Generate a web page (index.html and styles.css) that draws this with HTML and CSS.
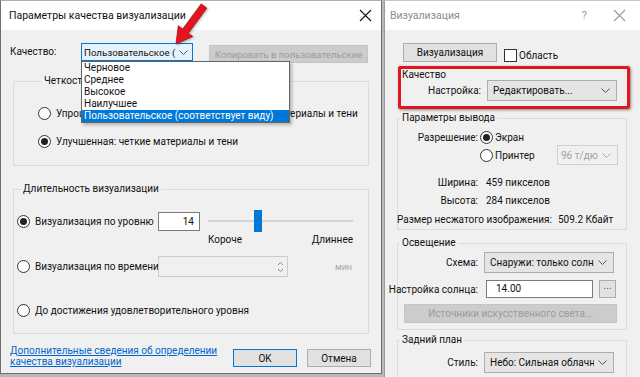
FILE: index.html
```html
<!DOCTYPE html>
<html lang="ru">
<head>
  <meta charset="UTF-8" />
  <title>Параметры качества визуализации</title>
  <link rel="stylesheet" href="styles.css">
</head>
<body>
  <div class="desktop">
    <!-- Quality settings dialog -->
    <div class="dialog dialog-quality">
      <div class="titlebar">
        <span class="title">Параметры качества визуализации</span>
        <svg class="close" width="13" height="13" viewBox="0 0 13 13"><path d="M1 1L12 12M12 1L1 12" stroke="#111" stroke-width="1.1"/></svg>
      </div>
      <div class="dialog-body">
        <div class="quality-row">
          <span class="quality-label">Качество:</span>
          <div class="combo-wrap">
            <div class="combo combo-focus">
              <span class="combo-text">Пользовательское (</span>
              <svg class="chev" width="9" height="5" viewBox="0 0 9 5"><polyline points="0.5,0.5 4.5,4.5 8.5,0.5" fill="none" stroke="#555"/></svg>
            </div>
            <ul class="dropdown">
              <li>Черновое</li>
              <li>Среднее</li>
              <li>Высокое</li>
              <li>Наилучшее</li>
              <li class="selected">Пользовательское (соответствует виду)</li>
            </ul>
          </div>
          <div class="btn btn-disabled btn-copy">Копировать в пользовательские</div>
        </div>

        <fieldset class="group group-sharp">
          <legend>Четкость освещения</legend>
          <div class="option"><span class="radio"></span>Упрощенная: размытые отражения, нечеткие материалы и тени</div>
          <div class="option"><span class="radio checked"></span>Улучшенная: четкие материалы и тени</div>
        </fieldset>

        <fieldset class="group group-time">
          <legend>Длительность визуализации</legend>
          <div class="time-row row-level">
            <div class="option option-fixed"><span class="radio checked"></span>Визуализация по уровню</div>
            <div class="num-box">14</div>
            <div class="slider"><span class="thumb"></span></div>
          </div>
          <div class="slider-labels">
            <span>Короче</span>
            <span>Длиннее</span>
          </div>
          <div class="time-row row-minutes">
            <div class="option option-fixed"><span class="radio"></span>Визуализация по времени</div>
            <div class="spin-box">
              <svg class="spin" width="9" height="14" viewBox="0 0 9 14"><path d="M2 5L4.5 2.5L7 5M2 9L4.5 11.5L7 9" fill="none" stroke="#888"/></svg>
            </div>
            <span class="unit">мин</span>
          </div>
          <div class="option row-enough"><span class="radio"></span>До достижения удовлетворительного уровня</div>
        </fieldset>

        <div class="footer">
          <a class="help-link" href="#">Дополнительные сведения об определении<br>качества визуализации</a>
          <div class="btn btn-default">OK</div>
          <div class="btn">Отмена</div>
        </div>
      </div>
    </div>

    <!-- Render panel -->
    <div class="dialog dialog-render">
      <div class="titlebar titlebar-inactive">
        <span class="title">Визуализация</span>
        <span class="title-tools">
          <span class="help">?</span>
          <svg width="13" height="13" viewBox="0 0 13 13"><path d="M1 1L12 12M12 1L1 12" stroke="#9a9a9a" stroke-width="1.1"/></svg>
        </span>
      </div>
      <div class="dialog-body render-body">
        <div class="render-row">
          <div class="btn btn-render">Визуализация</div>
          <span class="checkbox"></span>
          <span class="check-label">Область</span>
        </div>

        <div class="highlight">
          <div class="highlight-title">Качество</div>
          <div class="form-row">
            <span class="form-label">Настройка:</span>
            <div class="combo combo-wide">
              <span class="combo-text">Редактировать...</span>
              <svg class="chev" width="9" height="5" viewBox="0 0 9 5"><polyline points="0.5,0.5 4.5,4.5 8.5,0.5" fill="none" stroke="#555"/></svg>
            </div>
          </div>
        </div>

        <fieldset class="group side-group group-output">
          <legend>Параметры вывода</legend>
          <div class="form-row out-first">
            <span class="form-label">Разрешение:</span>
            <span class="radio checked"></span>
            <span class="radio-text">Экран</span>
          </div>
          <div class="form-row out-printer">
            <span class="form-label"></span>
            <span class="radio"></span>
            <span class="radio-text">Принтер</span>
            <div class="combo combo-disabled">
              <span class="combo-text">96 т/дюйм</span>
              <svg class="chev" width="9" height="5" viewBox="0 0 9 5"><polyline points="0.5,0.5 4.5,4.5 8.5,0.5" fill="none" stroke="#aaa"/></svg>
            </div>
          </div>
          <div class="form-row out-size">
            <span class="form-label">Ширина:</span>
            <span class="value">459 пикселов</span>
          </div>
          <div class="form-row out-height">
            <span class="form-label">Высота:</span>
            <span class="value">284 пикселов</span>
          </div>
          <div class="form-row out-raw">
            <span>Размер несжатого изображения:</span>
            <span class="raw-value">509.2 Кбайт</span>
          </div>
        </fieldset>

        <fieldset class="group side-group group-light">
          <legend>Освещение</legend>
          <div class="form-row light-scheme">
            <span class="form-label">Схема:</span>
            <div class="combo combo-wide">
              <span class="combo-text">Снаружи: только солнце</span>
              <svg class="chev" width="9" height="5" viewBox="0 0 9 5"><polyline points="0.5,0.5 4.5,4.5 8.5,0.5" fill="none" stroke="#555"/></svg>
            </div>
          </div>
          <div class="form-row light-sun">
            <span class="form-label">Настройка солнца:</span>
            <div class="text-box">14.00</div>
            <div class="btn btn-dots">...</div>
          </div>
          <div class="btn btn-disabled btn-lights">Источники искусственного света...</div>
        </fieldset>

        <fieldset class="group side-group group-back">
          <legend>Задний план</legend>
          <div class="form-row back-style">
            <span class="form-label">Стиль:</span>
            <div class="combo combo-wide">
              <span class="combo-text">Небо: Сильная облачность</span>
              <svg class="chev" width="9" height="5" viewBox="0 0 9 5"><polyline points="0.5,0.5 4.5,4.5 8.5,0.5" fill="none" stroke="#555"/></svg>
            </div>
          </div>
        </fieldset>
      </div>
    </div>

    <!-- Annotation arrow -->
    <svg class="arrow" width="50" height="50" viewBox="165 0 50 50">
      <polygon points="176,44 192.7,36.4 188.3,33.2 206.8,8.1 201.2,3.9 182.7,29 178.3,25.8" fill="#e3141c" stroke="#a80d12" stroke-width="0.8" stroke-linejoin="round"/>
    </svg>
  </div>
</body>
</html>
```

FILE: styles.css
```css
/* Reset & basic styling */
* {
  box-sizing: border-box;
  margin: 0;
  padding: 0;
}
body {
  font-family: Roboto, 'Liberation Sans', sans-serif;
  font-size: 10px;
  color: #111;
  background: #b8b8b8;
  width: 640px;
  height: 377px;
  overflow: hidden;
}
.desktop {
  position: relative;
  display: flex;
  height: 377px;
}
.dialog {
  background: #f0f0f0;
  display: flex;
  flex-direction: column;
}
.dialog-quality {
  width: 382px;
  height: 374px;
  border: 1px solid #6f6f6f;
  border-top-color: #b0b0b0;
}
.dialog-render {
  flex: 1;
  margin-left: 2px;
  border-left: 1px solid #9a9a9a;
  border-top: 1px solid #c8c8c8;
}

/* Title bars */
.titlebar {
  height: 29px;
  flex-shrink: 0;
  background: #fff;
  display: flex;
  align-items: center;
  justify-content: space-between;
  padding: 0 9px 0 8px;
}
.title {
  font-size: 10.5px;
}
.titlebar-inactive {
  padding: 0 14px 0 5px;
  color: #8c8c8c;
}
.title-tools {
  display: flex;
  align-items: center;
  gap: 26px;
}
.help {
  font-size: 11px;
  color: #9a9a9a;
}

/* Generic controls */
.btn {
  height: 18px;
  display: flex;
  align-items: center;
  justify-content: center;
  background: #e1e1e1;
  border: 1px solid #adadad;
  white-space: nowrap;
}
.btn-disabled {
  background: #cccccc;
  border-color: #c4c4c4;
  color: #9b9b9b;
}
.btn-default {
  border-color: #0078d7;
}
.radio {
  width: 13px;
  height: 13px;
  flex-shrink: 0;
  border: 1px solid #333;
  border-radius: 50%;
  background: #fff;
  display: flex;
  align-items: center;
  justify-content: center;
}
.radio.checked::after {
  content: '';
  width: 7px;
  height: 7px;
  border-radius: 50%;
  background: #222;
}
.checkbox {
  width: 13px;
  height: 13px;
  border: 1px solid #333;
  background: #fff;
}
.combo {
  height: 21px;
  display: flex;
  align-items: center;
  padding: 0 6px 0 5px;
  background: #e5e5e5;
  border: 1px solid #adadad;
  white-space: nowrap;
  overflow: hidden;
}
.combo-text {
  flex: 1;
  overflow: hidden;
}
.chev {
  flex-shrink: 0;
  margin-left: 4px;
}
.combo-disabled {
  background: #f0f0f0;
  border-color: #cfcfcf;
  color: #a0a0a0;
  padding-left: 3px;
}

/* Quality dialog */
.dialog-body {
  flex: 1;
  padding-top: 13px;
}
.quality-row {
  display: flex;
  align-items: flex-start;
  height: 19px;
  padding-left: 9px;
}
.quality-label {
  width: 71px;
  line-height: 18px;
}
.combo-wrap {
  position: relative;
  width: 112px;
}
.combo-focus {
  height: 18px;
  background: #e5f1fb;
  border-color: #0078d7;
  padding: 0 4px 0 2px;
  font-size: 9.7px;
}
.combo-focus .chev {
  margin-left: 2px;
}
.dropdown {
  position: absolute;
  top: 18px;
  left: 0;
  width: 209px;
  z-index: 2;
  list-style: none;
  background: #fff;
  border: 1px solid #646464;
  box-shadow: 2px 2px 3px rgba(0, 0, 0, 0.25);
}
.dropdown li {
  height: 12px;
  line-height: 12px;
  padding-left: 2px;
  white-space: nowrap;
}
.dropdown li.selected {
  background: #0078d7;
  color: #fff;
}
.btn-copy {
  width: 159px;
  margin: 2px 0 0 16px;
  font-size: 9.6px;
}

.group {
  border: 1px solid #dcdcdc;
  margin: 12px 12px 0;
}
.group legend {
  margin-left: 4px;
  padding: 0 2px;
  line-height: 14px;
}
.option {
  display: flex;
  align-items: center;
  gap: 5px;
  height: 16px;
  white-space: nowrap;
}
.group-sharp {
  display: flex;
  flex-direction: column;
  gap: 12px;
  padding: 17px 0 16px 24px;
}
.group-time {
  margin-top: 16px;
  padding: 14px 0 15px 3px;
}
.time-row {
  display: flex;
  align-items: center;
}
.row-level {
  height: 22px;
}
.option-fixed {
  width: 141px;
}
.num-box {
  width: 42px;
  height: 19px;
  background: #fff;
  border: 1px solid #7a7a7a;
  text-align: right;
  padding-right: 5px;
  line-height: 17px;
}
.slider {
  width: 145px;
  height: 22px;
  margin-left: 8px;
  display: flex;
  align-items: center;
  background: linear-gradient(#d4d4d4, #d4d4d4) center / 100% 2px no-repeat;
}
.thumb {
  width: 8px;
  height: 22px;
  margin-left: 46px;
  background: #0078d7;
}
.slider-labels {
  display: flex;
  justify-content: space-between;
  width: 145px;
  height: 14px;
  margin: 2px 0 0 191px;
}
.row-minutes {
  height: 21px;
  margin-top: 8px;
}
.spin-box {
  width: 130px;
  height: 21px;
  border: 1px solid #cccccc;
  background: #f0f0f0;
  display: flex;
  justify-content: flex-end;
  align-items: center;
  padding-right: 2px;
}
.unit {
  margin-left: 47px;
  font-size: 9px;
  color: #a8a8a8;
}
.row-enough {
  margin-top: 25px;
}

.footer {
  display: flex;
  align-items: flex-start;
  margin-top: 11px;
  padding: 0 10px 0 9px;
  gap: 10px;
}
.help-link {
  flex: 1;
  color: #0066cc;
  line-height: 11px;
}
.footer .btn {
  width: 64px;
  margin-top: 4px;
}

/* Render panel */
.render-body {
  padding-top: 13px;
}
.render-row {
  display: flex;
  align-items: flex-end;
  height: 19px;
  padding-left: 18px;
}
.btn-render {
  width: 94px;
  height: 19px;
}
.checkbox {
  margin-left: 7px;
}
.check-label {
  margin-left: 2px;
  line-height: 13px;
}
.highlight {
  width: 232px;
  height: 43px;
  margin: 4px 0 0 13px;
  border: 3px solid #e2161e;
  border-radius: 2px;
  box-shadow: 1px 1px 3px rgba(0, 0, 0, 0.45);
  padding-left: 1px;
}
.highlight-title {
  line-height: 11px;
}
.form-row {
  display: flex;
  align-items: center;
  white-space: nowrap;
}
.form-label {
  width: 80px;
  flex-shrink: 0;
  display: flex;
  justify-content: flex-end;
}
.highlight .form-row {
  height: 21px;
}
.highlight .form-label {
  width: 79px;
}
.combo-wide {
  width: 130px;
  margin-left: 6px;
}
.side-group {
  width: 230px;
  margin: 2px 0 0 12px;
}
.side-group legend {
  margin-left: 2px;
}
.group-output {
  padding: 4px 8px 2px 0;
}
.out-first {
  height: 16px;
}
.out-first .radio,
.out-printer .radio {
  margin-left: 2px;
}
.radio-text {
  margin-left: 2px;
}
.out-printer {
  height: 20px;
}
.out-printer .combo {
  width: 61px;
  height: 20px;
  margin-left: auto;
}
.out-size {
  height: 16px;
  margin-top: 9px;
}
.out-height {
  height: 16px;
  margin-top: 2px;
}
.value {
  margin-left: 8px;
}
.out-raw {
  height: 16px;
  margin: 3px 0 0 -1px;
}
.raw-value {
  margin-left: 6px;
}
.group-light {
  margin-top: 6px;
  padding: 2px 0 6px 0;
}
.light-scheme {
  height: 21px;
}
.light-sun {
  height: 18px;
  margin-top: 7px;
}
.text-box {
  width: 107px;
  height: 18px;
  margin-left: 8px;
  background: #fff;
  border: 1px solid #7a7a7a;
  padding-left: 9px;
  line-height: 16px;
}
.btn-dots {
  width: 17px;
  height: 18px;
  margin-left: 6px;
  color: #555;
  line-height: 10px;
  align-items: flex-start;
}
.btn-lights {
  width: 213px;
  height: 19px;
  margin: 6px 0 0 6px;
}
.group-back {
  margin-top: 3px;
  padding-top: 5px;
  height: 60px;
}
.back-style {
  height: 21px;
}

/* Annotation arrow */
.arrow {
  position: absolute;
  left: 165px;
  top: 0;
  z-index: 5;
  filter: drop-shadow(1px 1px 1px rgba(0, 0, 0, 0.3));
}
```
